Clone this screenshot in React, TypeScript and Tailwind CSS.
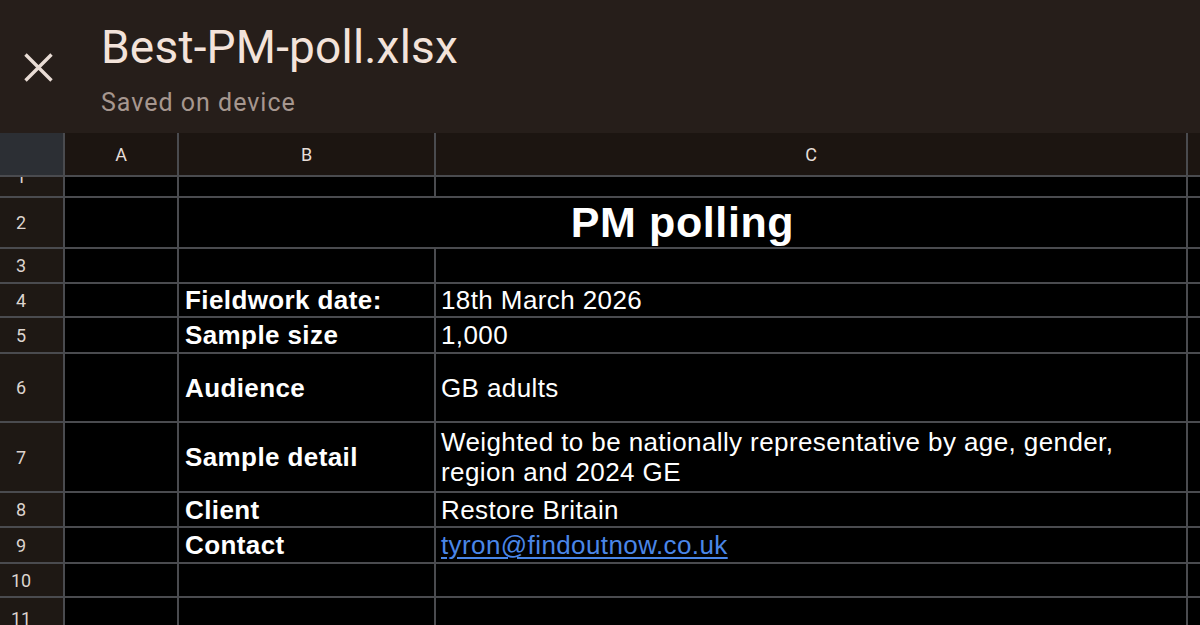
import React from "react";

function RowHead({ n, top }: { n: string; top?: boolean }) {
  if (top) {
    return (
      <div className="bg-[#1e1814] flex justify-center pr-[21px] overflow-hidden">
        <span className="-mt-[9px] leading-[18px] text-[18px] text-[#ddd4cf] [font-family:Roboto,'Noto_Sans',sans-serif]">
          {n}
        </span>
      </div>
    );
  }
  return (
    <div className="bg-[#1e1814] flex items-center justify-center pr-[21px] text-[18px] text-[#ddd4cf] [font-family:Roboto,'Noto_Sans',sans-serif]">
      {n}
    </div>
  );
}

function Cell({ children, bold, className = "" }: { children?: React.ReactNode; bold?: boolean; className?: string }) {
  return (
    <div
      className={`bg-black flex items-center text-white text-[26px] leading-[30px] tracking-[0.4px] [font-family:'Liberation_Sans',Arial,sans-serif] ${bold ? "font-bold pl-[6px]" : "pl-[5px]"} ${className}`}
    >
      {children}
    </div>
  );
}

function ColHead({ l }: { l: string }) {
  return (
    <div className="bg-[#1c1511] flex items-center justify-center text-[18px] text-[#e6ddd8] [font-family:Roboto,'Noto_Sans',sans-serif]">
      {l}
    </div>
  );
}

export default function App() {
  return (
    <div className="w-[1200px] h-[625px] overflow-hidden bg-black flex flex-col">
      <div className="h-[133px] shrink-0 bg-[#261e1a] flex">
        <div className="w-[101px] shrink-0 pl-[23px] pt-[52px]">
          <svg width="31" height="31" viewBox="0 0 31 31">
            <path d="M2.5 2.5 L28.5 28.5 M28.5 2.5 L2.5 28.5" stroke="#e9dcd5" strokeWidth="3.4" strokeLinecap="butt" fill="none" />
          </svg>
        </div>
        <div className="flex flex-col pt-[24px]">
          <div className="text-[46px] leading-[46px] text-[#f3e3da] [font-family:Roboto,'Noto_Sans',sans-serif] tracking-[0.2px]">
            Best-PM-poll.xlsx
          </div>
          <div className="mt-[21px] text-[25px] leading-[24px] text-[#a6978f] tracking-[1px] [font-family:Roboto,'Noto_Sans',sans-serif]">
            Saved on device
          </div>
        </div>
      </div>
      <div className="grid grid-cols-[63px_112px_255px_750px_1fr] grid-rows-[42px_19px_49px_33px_32px_34px_67px_68px_33px_34px_32px_40px] gap-[2px] bg-[#4a4b4f]">
        <div className="bg-[#2c2f34]" />
        <ColHead l="A" />
        <ColHead l="B" />
        <ColHead l="C" />
        <div className="bg-[#1c1511]" />

        <RowHead n="1" top />
        <Cell />
        <Cell />
        <Cell />
        <Cell />

        <RowHead n="2" />
        <Cell />
        <div className="col-span-2 bg-black flex items-center justify-center text-white text-[43px] font-bold tracking-[0.6px] [font-family:'Liberation_Sans',Arial,sans-serif]">
          PM polling
        </div>
        <Cell />

        <RowHead n="3" />
        <Cell />
        <Cell />
        <Cell />
        <Cell />

        <RowHead n="4" />
        <Cell />
        <Cell bold>Fieldwork date:</Cell>
        <Cell>18th March 2026</Cell>
        <Cell />

        <RowHead n="5" />
        <Cell />
        <Cell bold>Sample size</Cell>
        <Cell>1,000</Cell>
        <Cell />

        <RowHead n="6" />
        <Cell />
        <Cell bold>Audience</Cell>
        <Cell>GB adults</Cell>
        <Cell />

        <RowHead n="7" />
        <Cell />
        <Cell bold>Sample detail</Cell>
        <Cell>
          <span>
            Weighted to be nationally representative by age, gender,
            <br />
            region and 2024 GE
          </span>
        </Cell>
        <Cell />

        <RowHead n="8" />
        <Cell />
        <Cell bold>Client</Cell>
        <Cell>Restore Britain</Cell>
        <Cell />

        <RowHead n="9" />
        <Cell />
        <Cell bold>Contact</Cell>
        <Cell>
          <span className="text-[#4a86e8] underline decoration-[2px] underline-offset-[3px]">tyron@findoutnow.co.uk</span>
        </Cell>
        <Cell />

        <RowHead n="10" />
        <Cell />
        <Cell />
        <Cell />
        <Cell />

        <RowHead n="11" />
        <Cell />
        <Cell />
        <Cell />
        <Cell />
      </div>
    </div>
  );
}
